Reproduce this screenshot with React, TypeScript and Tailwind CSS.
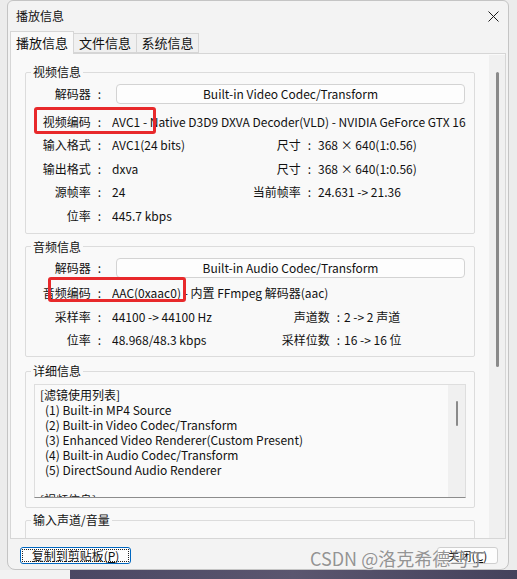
import React from "react";

const font = "font-['Noto_Sans_CJK_SC','Noto_Sans_CJK_JP',sans-serif]";

const Label: React.FC<{ text: string; w: string }> = ({ text, w }) => (
  <span className={`shrink-0 text-right ${w}`}>
    {text}
    <span className="ml-[7px]">:</span>
  </span>
);

type RowProps = {
  label: string;
  value: React.ReactNode;
  rLabel?: string;
  rValue?: string;
  valueW: string;
  rLabelW?: string;
  rGap?: string;
};

const Row: React.FC<RowProps> = ({ label, value, rLabel, rValue, valueW, rLabelW = "", rGap = "" }) => (
  <div className="flex h-[23.5px] items-center whitespace-nowrap">
    <Label text={label} w="w-[75px]" />
    <span className={`ml-[11px] shrink-0 overflow-hidden ${valueW}`}>{value}</span>
    {rLabel && <Label text={rLabel} w={rLabelW} />}
    {rValue && <span className={rGap}>{rValue}</span>}
  </div>
);

const Decoder: React.FC<{ text: string; mt: string }> = ({ text, mt }) => (
  <div className={`flex h-[20px] items-center ${mt}`}>
    <Label text="解码器" w="w-[75px]" />
    <div className="ml-[15px] flex h-[20px] w-[349px] items-center justify-center rounded-[4px] border border-[#d3d3d3] bg-[#fdfdfd]">
      {text}
    </div>
  </div>
);

const filters = [
  "(1) Built-in MP4 Source",
  "(2) Built-in Video Codec/Transform",
  "(3) Enhanced Video Renderer(Custom Present)",
  "(4) Built-in Audio Codec/Transform",
  "(5) DirectSound Audio Renderer",
];

export default function App() {
  return (
    <div className={`relative h-[579px] w-[517px] overflow-hidden bg-[#ececec] text-[12px] text-[#111] ${font}`}>
      <div className="flex h-[570px]">
        {/* dialog window */}
        <div className="ml-[7px] flex h-[570px] w-[502px] flex-col rounded-b-[8px] rounded-t-[6px] border border-[#c4c4c4] bg-[#f3f3f3]">
          {/* title bar */}
          <div className="flex h-[30px] shrink-0 items-center justify-between pl-[8px] pr-[8px]">
            <span className="text-[12px]">播放信息</span>
            <svg width="11" height="11" viewBox="0 0 11 11" className="mr-[1px]">
              <path d="M0.5 0.5 L10.5 10.5 M10.5 0.5 L0.5 10.5" stroke="#1a1a1a" strokeWidth="1" />
            </svg>
          </div>

          {/* tabs */}
          <div className="flex h-[22px] shrink-0 items-end pl-[2px] text-[13px]">
            <div className="relative z-10 -mb-px flex h-[23px] w-[64px] items-center justify-center border border-b-0 border-[#d6d6d6] bg-[#f9f9f9]">
              播放信息
            </div>
            <div className="flex h-[20px] w-[63px] items-center justify-center border border-l-0 border-[#d6d6d6] bg-[#f0f0f0]">
              文件信息
            </div>
            <div className="flex h-[20px] w-[62px] items-center justify-center border border-l-0 border-[#d6d6d6] bg-[#f0f0f0]">
              系统信息
            </div>
          </div>

          {/* tab panel */}
          <div className="mx-[2px] flex h-[486px] shrink-0 overflow-hidden border border-[#d6d6d6] bg-[#f9f9f9]">
            <div className="flex-1 overflow-hidden">
              {/* video */}
              <fieldset className="mx-[14px] mt-[10px] rounded-[2px] border border-[#dcdcdc] pb-[5px]">
                <legend className="ml-[5px] px-[2px] leading-[16px]">视频信息</legend>
                <Decoder text="Built-in Video Codec/Transform" mt="mt-[4px]" />
                <div className="mt-[6px]">
                  <Row
                    label="视频编码"
                    value="AVC1 - Native D3D9 DXVA Decoder(VLD) - NVIDIA GeForce GTX 1650"
                    valueW="w-[354px]"
                  />
                  <Row label="输入格式" value="AVC1(24 bits)" rLabel="尺寸" rValue="368 × 640(1:0.56)" valueW="w-[138px]" rLabelW="w-[61px]" rGap="ml-[7px]" />
                  <Row label="输出格式" value="dxva" rLabel="尺寸" rValue="368 × 640(1:0.56)" valueW="w-[138px]" rLabelW="w-[61px]" rGap="ml-[7px]" />
                  <Row label="源帧率" value="24" rLabel="当前帧率" rValue="24.631 -> 21.36" valueW="w-[138px]" rLabelW="w-[61px]" rGap="ml-[7px]" />
                  <Row label="位率" value="445.7 kbps" valueW="w-[138px]" />
                </div>
              </fieldset>

              {/* audio */}
              <fieldset className="mx-[14px] mt-[5px] rounded-[2px] border border-[#dcdcdc] pb-[4px]">
                <legend className="ml-[5px] px-[2px] leading-[16px]">音频信息</legend>
                <Decoder text="Built-in Audio Codec/Transform" mt="mt-[3px]" />
                <div className="mt-[4px]">
                  <Row label="音频编码" value="AAC(0xaac0) - 内置 FFmpeg 解码器(aac)" valueW="w-[354px]" />
                  <Row label="采样率" value="44100 -> 44100 Hz" rLabel="声道数" rValue="2 -> 2 声道" valueW="w-[150px]" rLabelW="w-[78px]" rGap="ml-[4px]" />
                  <Row label="位率" value="48.968/48.3 kbps" rLabel="采样位数" rValue="16 -> 16 位" valueW="w-[150px]" rLabelW="w-[78px]" rGap="ml-[4px]" />
                </div>
              </fieldset>

              {/* details */}
              <fieldset className="mx-[14px] mt-[6px] rounded-[2px] border border-[#dcdcdc] pb-[9px]">
                <legend className="ml-[5px] px-[2px] leading-[16px]">详细信息</legend>
                <div className="mx-[8px] mt-[5px] flex h-[114px] overflow-hidden border border-[#dedede] border-b-[#8c8c8c] bg-[#fafafa]">
                  <div className="flex-1 overflow-hidden whitespace-nowrap pl-[5px] pt-[2px] leading-[15px]">
                    <div>[滤镜使用列表]</div>
                    {filters.map((f) => (
                      <div key={f} className="pl-[5px]">
                        {f}
                      </div>
                    ))}
                    <div className="h-[15px]" />
                    <div>[视频信息]</div>
                  </div>
                  <div className="flex w-[17px] shrink-0 justify-center bg-[#f0f0f0] pt-[16px]">
                    <div className="h-[25px] w-[2px] rounded-full bg-[#8a8a8a]" />
                  </div>
                </div>
              </fieldset>

              {/* input volume */}
              <fieldset className="mx-[14px] mt-[4px] h-[40px] rounded-[2px] border border-[#dcdcdc]">
                <legend className="ml-[5px] px-[2px] leading-[16px]">输入声道/音量</legend>
              </fieldset>
            </div>

            {/* outer scrollbar */}
            <div className="mt-[1px] flex w-[16px] shrink-0 justify-center bg-[#f0f0f0] pt-[17px]">
              <div className="h-[295px] w-[3px] rounded-full bg-[#8a8a8a]" />
            </div>
          </div>

          {/* bottom buttons */}
          <div className="flex items-start justify-between pl-[12px] pr-[10px] pt-[8px]">
            <button className="flex h-[17px] w-[111px] items-center justify-center rounded-[3px] border border-[#0067c0] bg-[#fdfdfd] p-[1px] leading-none">
              <span className="flex h-full w-full items-center justify-center border border-dotted border-[#222]">
                复制到剪贴板(<span className="underline">P</span>)
              </span>
            </button>
            <button className="flex h-[17px] w-[61px] items-center justify-center rounded-[3px] border border-[#cfcfcf] bg-[#fdfdfd] leading-none">
              关闭(<span className="underline">C</span>)
            </button>
          </div>
        </div>
      </div>

      {/* below-window desktop strip */}
      <div className="flex h-[9px]">
        <div className="w-[70px] bg-[#f2f2f2]" />
        <div className="flex-1 bg-gradient-to-r from-[#4a4763] via-[#5b566f] to-[#45425c]" />
      </div>

      {/* red annotation boxes */}
      <div className="absolute left-[34px] top-[107px] h-[27px] w-[122px] rounded-[3px] border-[3px] border-[#e8292b]" />
      <div className="absolute left-[48px] top-[277px] h-[25px] w-[138px] rounded-[3px] border-[3px] border-[#e8292b]" />

      {/* watermark */}
      <div className="absolute left-[310px] top-[546px] font-['Noto_Sans_CJK_SC',sans-serif] text-[18px] leading-[24px] text-[#8a8a8a] opacity-90 [text-shadow:0_0_2px_#fff]">
        CSDN @洛克希德马丁
      </div>
    </div>
  );
}
